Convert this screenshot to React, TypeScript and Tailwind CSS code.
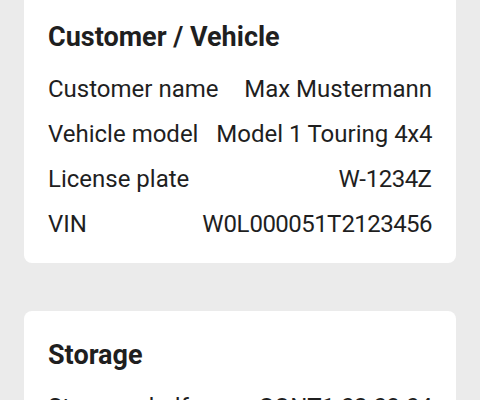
const SECTIONS = [
  {
    title: 'Customer / Vehicle',
    rows: [
      { label: 'Customer name', value: 'Max Mustermann' },
      { label: 'Vehicle model', value: 'Model 1 Touring 4x4' },
      { label: 'License plate', value: 'W-1234Z' },
      { label: 'VIN', value: 'W0L000051T2123456' },
    ],
  },
  {
    title: 'Storage',
    rows: [
      { label: 'Storage shelf', value: 'CONT1-02-03-04' },
      { label: 'Storage date', value: '12.03.2024' },
    ],
  },
]

// digits in the reference run a little narrower than Roboto's tabular figures
function Value({ text }: { text: string }) {
  const parts = text.split(/(\d+)/)
  return (
    <span className="whitespace-nowrap text-right">
      {parts.map((p, i) =>
        /^\d+$/.test(p) ? (
          <span key={i} className="tracking-[-0.55px]">{p}</span>
        ) : (
          p
        )
      )}
    </span>
  )
}

export default function App() {
  return (
    <div
      className="min-h-screen bg-[#ebebeb] px-6 text-[#1f1f1f]"
      style={{ fontFamily: 'Roboto, "Liberation Sans", sans-serif' }}
    >
      <div className="-mt-[7px] flex flex-col gap-12">
        {SECTIONS.map(s => (
          <div key={s.title} className="rounded-lg bg-white px-6 pt-7 pb-4">
            <h2 className="text-[27px] font-bold leading-8">{s.title}</h2>
            <div className="mt-[14px]">
              {s.rows.map(r => (
                <div key={r.label} className="flex justify-between gap-4 text-[24px] leading-[45px]">
                  <span className="whitespace-nowrap">{r.label}</span>
                  <Value text={r.value} />
                </div>
              ))}
            </div>
          </div>
        ))}
      </div>
    </div>
  )
}
